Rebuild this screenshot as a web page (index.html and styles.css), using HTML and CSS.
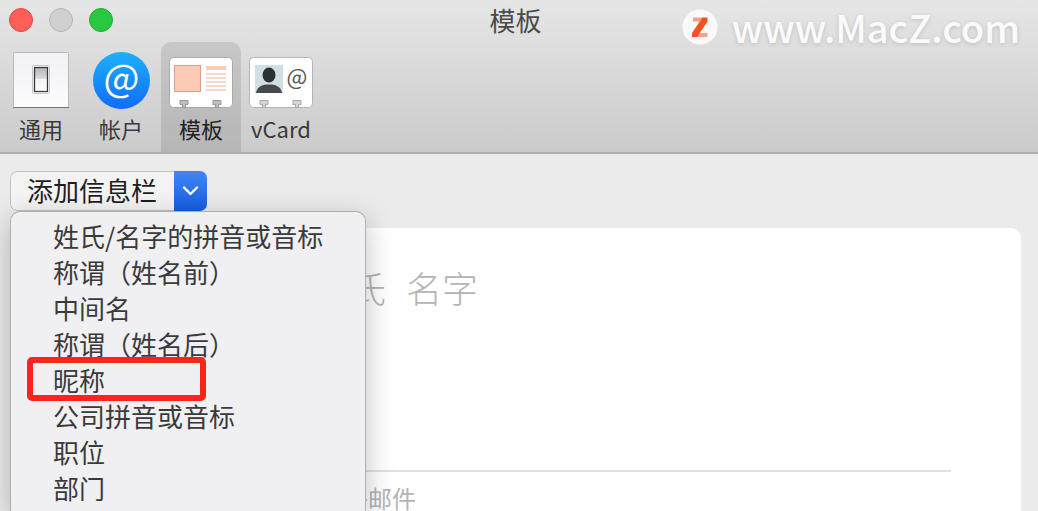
FILE: index.html
```
<!DOCTYPE html>
<html lang="zh-CN">
<head>
  <meta charset="utf-8">
  <title>模板</title>
  <link rel="stylesheet" href="styles.css">
</head>
<body>

  <header class="header">
    <div class="titlebar">
      <div class="lights">
        <button type="button" class="light red" aria-label="关闭"></button>
        <button type="button" class="light gray" aria-label="最小化"></button>
        <button type="button" class="light green" aria-label="缩放"></button>
      </div>
      <h1 class="title">模板</h1>
    </div>

    <nav class="toolbar">
      <button type="button" class="tab">
        <svg class="icon" width="64" height="64" viewBox="0 0 64 64">
          <defs>
            <linearGradient id="plate" x1="0" y1="0" x2="0" y2="1">
              <stop offset="0" stop-color="#f1f1f5"/>
              <stop offset="1" stop-color="#fcfcfd"/>
            </linearGradient>
            <linearGradient id="rocker" x1="0" y1="0" x2="0" y2="1">
              <stop offset="0" stop-color="#b4b4b6"/>
              <stop offset="0.45" stop-color="#dadadc"/>
              <stop offset="0.5" stop-color="#f4f4f5"/>
              <stop offset="1" stop-color="#ffffff"/>
            </linearGradient>
          </defs>
          <rect x="4.500" y="4.500" width="55" height="55" rx="1" fill="url(#plate)" stroke="#b9b9bb"/>
          <path d="M4 59.500h56" stroke="#777" stroke-width="1"/>
          <rect x="23.500" y="17.500" width="17" height="28" rx="1" fill="#fff" stroke="#c8c8ca"/>
          <rect x="25.500" y="19.500" width="13" height="24" fill="url(#rocker)" stroke="#38383a" stroke-width="1.300"/>
        </svg>
        <span>通用</span>
      </button>
      <button type="button" class="tab">
        <svg class="icon" width="64" height="64" viewBox="0 0 64 64">
          <defs>
            <linearGradient id="blue" x1="0" y1="0" x2="0" y2="1">
              <stop offset="0" stop-color="#1fb0fa"/>
              <stop offset="1" stop-color="#0f6cfa"/>
            </linearGradient>
          </defs>
          <circle cx="32.500" cy="32.500" r="28.500" fill="url(#blue)"/>
          <text x="32.500" y="44" class="at-big">@</text>
        </svg>
        <span>帐户</span>
      </button>
      <button type="button" class="tab active">
        <svg class="icon" width="64" height="64" viewBox="0 0 64 64">
          <rect x="0.500" y="9.500" width="63" height="50" rx="4" fill="#fff" stroke="#a9a9a9"/>
          <rect x="5.500" y="17.500" width="26" height="26" fill="#fdcbb5" stroke="#d9a08a"/>
          <path d="M37 20h20" stroke="#f9cdba" stroke-width="4"/>
          <path d="M37 26h20M37 30h20M37 34h20M37 38h20M37 42h20" stroke="#f6d9cc" stroke-width="2"/>
          <path d="M11 52.500h8v4h-2.500v3h-3v-3H11zM44 52.500h8v4h-2.500v3h-3v-3H44z" fill="#bdbdbd" stroke="#969696"/>
        </svg>
        <span>模板</span>
      </button>
      <button type="button" class="tab">
        <svg class="icon" width="64" height="64" viewBox="0 0 64 64">
          <rect x="0.500" y="9.500" width="63" height="50" rx="4" fill="#fff" stroke="#b4b4b4"/>
          <rect x="6" y="17" width="28" height="28" fill="#cfdfe4"/>
          <ellipse cx="20" cy="27" rx="6.500" ry="7.500" fill="#2e3133"/>
          <path d="M7 45c1-7 7-8.500 13-8.500s12 1.500 13 8.500z" fill="#45494c"/>
          <text x="48" y="37" class="at-small">@</text>
          <path d="M11 52.500h8v4h-2.500v3h-3v-3H11zM44 52.500h8v4h-2.500v3h-3v-3H44z" fill="#d6d6d6" stroke="#a6a6a6"/>
        </svg>
        <span>vCard</span>
      </button>
    </nav>

    <div class="watermark">
      <svg width="36" height="36" viewBox="0 0 36 36">
        <circle cx="18" cy="18" r="17.500" fill="#fafafa"/>
        <path d="M11 8.500h10v4H11zM15 24h10.500v4H15z" fill="#fba184"/>
        <path d="M20.500 8.500h5v4L15 28h-5v-4z" fill="#f4511e"/>
      </svg>
      <span>www.MacZ.com</span>
    </div>
  </header>

  <main class="content">
    <div class="dropdown">
      <button type="button" class="add-field" aria-haspopup="menu" aria-expanded="true">
        <span class="add-label">添加信息栏</span>
        <span class="add-arrow">
          <svg width="17" height="12" viewBox="0 0 17 12">
            <path d="M2 2.500l6.500 6.500L15 2.500" fill="none" stroke="#fff" stroke-width="2.400" stroke-linecap="round" stroke-linejoin="round"/>
          </svg>
        </span>
      </button>
      <ul class="menu" role="menu">
        <li role="menuitem">姓氏/名字的拼音或音标</li>
        <li role="menuitem">称谓（姓名前）</li>
        <li role="menuitem">中间名</li>
        <li role="menuitem">称谓（姓名后）</li>
        <li role="menuitem" class="marked">昵称</li>
        <li role="menuitem">公司拼音或音标</li>
        <li role="menuitem">职位</li>
        <li role="menuitem">部门</li>
      </ul>
    </div>

    <section class="card">
      <div class="name-row">
        <span>姓氏</span>
        <span>名字</span>
      </div>
      <div class="mail-row">电子邮件</div>
    </section>
  </main>

</body>
</html>
```
FILE: styles.css
```
*,
*::before {
  box-sizing: border-box;
}

body {
  margin: 0;
  height: 100vh;
  overflow: hidden;
  display: flex;
  flex-direction: column;
  background-color: #ebebeb;
  font-family: "Noto Sans CJK SC", sans-serif;
  color: #3a3a3a;
}

button {
  margin: 0;
  padding: 0;
  border: none;
  background: none;
  font: inherit;
  color: inherit;
}

.header {
  position: relative;
  background: linear-gradient(#e6e6e6, #cbcbcb);
  border-bottom: 2px solid #adadad;
}

.titlebar {
  display: grid;
  grid-template-columns: 1fr auto 1fr;
  align-items: center;
  height: 42px;
  padding: 0 16px 2px 9px;
}

.lights {
  display: flex;
  gap: 16px;
}

.light {
  width: 24px;
  height: 24px;
  border-radius: 50%;
  border: 1px solid #b5b5b5;
}

.light.red {
  background-color: #fe5f57;
  border-color: #e2463f;
}

.light.gray {
  background-color: #d0d0d0;
}

.light.green {
  background-color: #28c840;
  border-color: #1dad2b;
}

.title {
  margin: 0;
  font-size: 26px;
  font-weight: 400;
  line-height: 40px;
  color: #4a4a4a;
}

.toolbar {
  display: flex;
  padding-left: 1px;
}

.tab {
  display: flex;
  flex-direction: column;
  align-items: center;
  width: 80px;
  padding: 6px 0 8px;
  border-radius: 10px 10px 0 0;
  font-size: 22px;
  line-height: 32px;
}

.tab.active {
  background-color: rgba(0, 0, 0, 0.1);
  color: #222;
}

.icon {
  display: block;
}

.at-big {
  font-family: "Noto Sans CJK SC", sans-serif;
  font-size: 38px;
  fill: #fff;
  text-anchor: middle;
}

.at-small {
  font-family: "Noto Sans CJK SC", sans-serif;
  font-size: 22px;
  fill: #555;
  text-anchor: middle;
}

.watermark {
  position: absolute;
  top: 8px;
  right: 18px;
  display: flex;
  align-items: center;
  gap: 14px;
  font-size: 38px;
  font-weight: 500;
  line-height: 38px;
  color: #fafafa;
  text-shadow: 0 1px 4px rgba(0, 0, 0, 0.15);
}

.content {
  flex: 1;
  display: flex;
  flex-direction: column;
  padding: 17px 17px 0 10px;
}

.dropdown {
  position: relative;
  align-self: flex-start;
}

.add-field {
  display: flex;
  height: 40px;
  border-radius: 7px;
  overflow: hidden;
  font-size: 26px;
  line-height: 36px;
  color: #1e1e1e;
}

.add-label {
  padding: 0 17px 0 16px;
  background-color: #f3f3f3;
  border: 1px solid #c2c2c2;
  border-right: none;
  border-radius: 7px 0 0 7px;
}

.add-arrow {
  display: flex;
  align-items: center;
  justify-content: center;
  width: 33px;
  background: linear-gradient(#4287f5, #135ce0);
}

.menu {
  position: absolute;
  top: 40px;
  left: 0;
  z-index: 1;
  width: 356px;
  margin: 0;
  padding: 6px 0 6px 42px;
  list-style: none;
  background-color: #f0f0f2;
  border: 1px solid #b0b0b0;
  border-bottom: none;
  border-radius: 10px 10px 0 0;
  box-shadow: 0 8px 28px rgba(0, 0, 0, 0.25);
  font-size: 26px;
  line-height: 36px;
  white-space: nowrap;
}

.marked {
  position: relative;
}

.marked::before {
  content: "";
  position: absolute;
  top: -5px;
  left: -26px;
  width: 179px;
  height: 44px;
  border: 6px solid #f8261a;
  border-radius: 5px;
}

.card {
  flex: 1;
  margin-top: 17px;
  padding: 34px 70px 0 304px;
  background-color: #fff;
  border-radius: 10px 10px 0 0;
  color: #b4b4b4;
}

.name-row {
  display: flex;
  gap: 20px;
  height: 210px;
  border-bottom: 2px solid #e0e0e0;
  font-size: 36px;
  font-weight: 300;
  line-height: 50px;
}

.mail-row {
  padding: 10px 0 0 6px;
  font-size: 24px;
  line-height: 32px;
}
```
